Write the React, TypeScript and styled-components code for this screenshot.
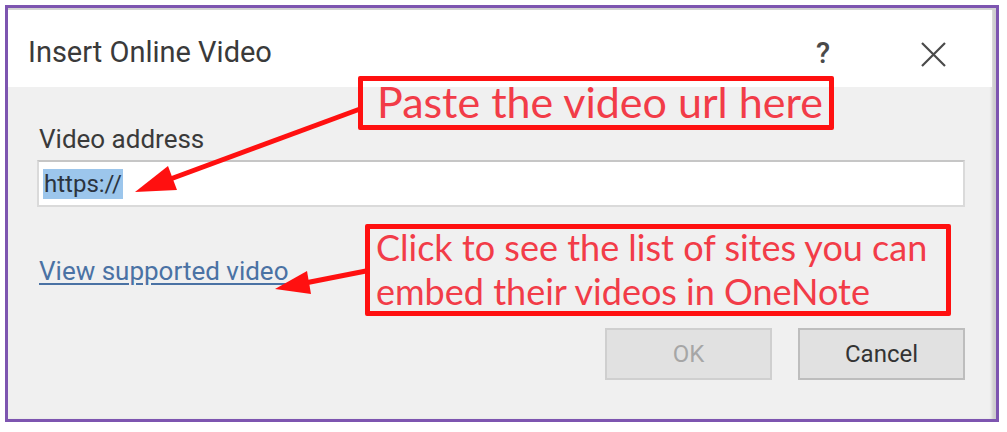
import React from "react";
import styled, { createGlobalStyle } from "styled-components";

const Global = createGlobalStyle`
  html, body { margin: 0; padding: 0; background: #ffffff; }
  body { font-family: Roboto, "Liberation Sans", sans-serif; }
`;

const Page = styled.div`
  position: relative;
  width: 1007px;
  height: 432px;
  padding: 5px 8px 10px 5px;
  box-sizing: border-box;
`;

const Frame = styled.div`
  height: 417px;
  width: 994px;
  box-sizing: border-box;
  border: 3px solid #7d55b0;
  display: flex;
  flex-direction: column;
  background: #f0f0f0;
  box-shadow: inset 0 3px 1px -1px #d2d2d2, inset -5px 0 3px -1px #cdcdcd;
`;

const TitleBar = styled.div`
  height: 77px;
  background: #ffffff;
  display: flex;
  align-items: flex-start;
  padding: 27px 45px 0 20px;
  box-sizing: border-box;
  margin-right: 4px;
  margin-top: 2px;
`;

const Title = styled.div`
  font-size: 29px;
  color: #3a3a3a;
  flex: 1;
  line-height: 1.1;
`;

const Help = styled.div`
  font-size: 29px;
  font-weight: 500;
  color: #4a4a4a;
  line-height: 1.1;
  margin-right: 90px;
  margin-top: 1px;
`;

const CloseIcon = styled.svg`
  width: 27px;
  height: 25px;
  margin-top: 5px;
`;

const Body = styled.div`
  flex: 1;
  display: flex;
  flex-direction: column;
  padding: 39px 31px 0 29px;
`;

const Label = styled.div`
  font-size: 26px;
  color: #3a3a3a;
  padding-left: 2px;
  line-height: 1;
  height: 34px;
`;

const Input = styled.div`
  height: 47px;
  box-sizing: border-box;
  background: #ffffff;
  border: 2px solid #dadada;
  border-top-color: #c6c6c6;
  display: flex;
  align-items: center;
  padding-left: 4px;
`;

const Selected = styled.span`
  background: #9cc6ec;
  color: #2b3440;
  font-size: 24px;
  line-height: 30px;
  padding: 0 1px;
`;

const Link = styled.a`
  align-self: flex-start;
  margin-top: 50px;
  padding-left: 2px;
  font-size: 26px;
  color: #4a72a4;
  text-decoration: underline;
  text-underline-offset: 3px;
  line-height: 1.1;
`;

const Buttons = styled.div`
  margin-top: 42px;
  display: flex;
  justify-content: flex-end;
  gap: 26px;
`;

const Button = styled.button<{ $disabled?: boolean }>`
  width: 167px;
  height: 52px;
  box-sizing: border-box;
  background: #e1e1e1;
  border: 2px solid ${(p) => (p.$disabled ? "#cfcfcf" : "#bdbdbd")};
  color: ${(p) => (p.$disabled ? "#a6a6a6" : "#333333")};
  font-family: Roboto, "Liberation Sans", sans-serif;
  font-size: 24px;
  padding: 0;
`;

const Note = styled.div<{ $left: number; $top: number; $w: number; $h: number; $size: number; $lh: number; $pad: number }>`
  position: absolute;
  left: ${(p) => p.$left}px;
  top: ${(p) => p.$top}px;
  width: ${(p) => p.$w}px;
  height: ${(p) => p.$h}px;
  box-sizing: border-box;
  border: 5px solid #ff1010;
  border-radius: 2px;
  color: #f23c48;
  font-family: Lato, "Liberation Sans", sans-serif;
  font-size: ${(p) => p.$size}px;
  line-height: ${(p) => p.$lh}px;
  padding: 0 0 0 ${(p) => p.$pad}px;
  white-space: nowrap;
`;

const NoteText = styled.div<{ $shift: number }>`
  margin-top: ${(p) => p.$shift}px;
`;

const Arrows = styled.svg`
  position: absolute;
  left: 0;
  top: 0;
  width: 1007px;
  height: 432px;
  pointer-events: none;
`;

export default function App() {
  return (
    <>
      <Global />
      <Page>
        <Frame>
          <TitleBar>
            <Title>Insert Online Video</Title>
            <Help>?</Help>
            <CloseIcon viewBox="0 0 27 25">
              <path d="M2 1 L25 24 M25 1 L2 24" stroke="#4a4a4a" strokeWidth="2.2" fill="none" />
            </CloseIcon>
          </TitleBar>
          <Body>
            <Label>Video address</Label>
            <Input>
              <Selected>https://</Selected>
            </Input>
            <Link href="#">View supported video</Link>
            <Buttons>
              <Button $disabled>OK</Button>
              <Button>Cancel</Button>
            </Buttons>
          </Body>
        </Frame>
        <Note $left={358} $top={76} $w={476} $h={54} $size={43} $lh={46} $pad={14}>
          <NoteText $shift={-2}>Paste the video url here</NoteText>
        </Note>
        <Note $left={365} $top={224} $w={586} $h={92} $size={36} $lh={44} $pad={6}>
          <NoteText $shift={-4}>
            Click to see the list of sites you can
            <br />
            embed their videos in OneNote
          </NoteText>
        </Note>
        <Arrows viewBox="0 0 1007 432">
          <line x1="360" y1="109" x2="165" y2="181" stroke="#ff1010" strokeWidth="5" />
          <polygon points="135,192 168,166 177,190" fill="#ff1010" />
          <line x1="366" y1="271" x2="300" y2="284" stroke="#ff1010" strokeWidth="5" />
          <polygon points="275,289 307,271 311,294" fill="#ff1010" />
        </Arrows>
      </Page>
    </>
  );
}
